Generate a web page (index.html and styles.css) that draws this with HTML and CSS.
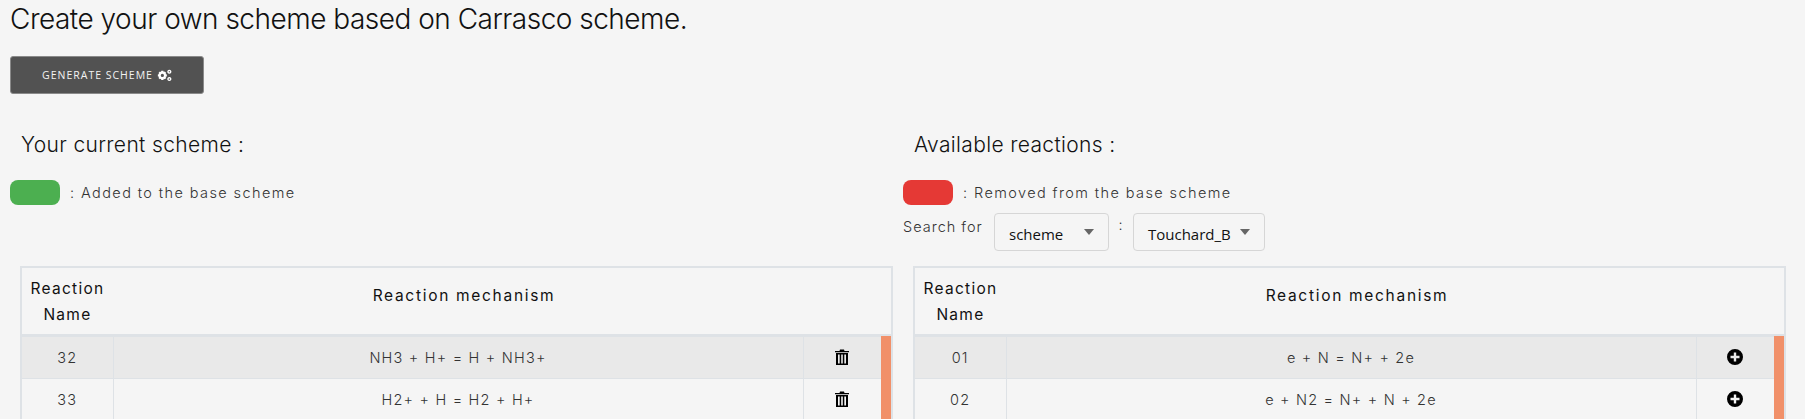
FILE: index.html
```html
<!DOCTYPE html>
<html lang="en">
<head>
<meta charset="utf-8">
<title>Create your own scheme</title>
<link rel="stylesheet" href="styles.css">
</head>
<body>
<h1 class="title">Create your own scheme based on Carrasco scheme.</h1>
<button class="generate" type="button">GENERATE SCHEME
  <svg class="gears" viewBox="0 0 14 12" width="15" height="13"><path fill="#fff" fill-rule="evenodd" d="M4 1.6h2l.3 1.2 1-.5 1.3 1.3-.6 1 1.2.4v1.9l-1.2.3.6 1.1L7.3 9.600l-1-.6-.3 1.200H4l-.3-1.200-1 .6L1.400 8.300l.6-1.100L.8 6.900V5l1.200-.4-.6-1 1.300-1.300 1 .5zM5 4.400a1.500 1.500 0 1 0 0 3 1.500 1.500 0 0 0 0-3z"/><path fill="none" stroke="#fff" stroke-width="1.300" d="M11.500 1.200a1.300 1.300 0 1 0 .01 0zM11.500 8a1.300 1.300 0 1 0 .01 0z"/></svg>
</button>
<div class="columns">
  <section class="col">
    <h2 class="sub">Your current scheme :</h2>
    <div class="legend"><span class="pill green"></span><span>: Added to the base scheme</span></div>
    <div class="search-spacer"></div>
    <div class="table-wrap">
      <table class="reactions">
        <thead><tr><th class="c-name">Reaction<br>Name</th><th class="c-mech">Reaction mechanism</th><th class="c-act"></th></tr></thead>
        <tbody>
          <tr class="alt"><td class="c-name">32</td><td>NH3 + H+ = H + NH3+</td><td class="c-act">
            <svg class="icon" viewBox="0 0 14 16"><path fill-rule="evenodd" d="M0 2h4.500l.5-1.500h4L9.500 2H14v1.300H0zM1 4h12v12H1zM3 5.500v9h1.700v-9zM6.200 5.500v9h1.600v-9zM9.300 5.500v9H11v-9z"/></svg></td></tr>
          <tr><td class="c-name">33</td><td>H2+ + H = H2 + H+</td><td class="c-act">
            <svg class="icon" viewBox="0 0 14 16"><path fill-rule="evenodd" d="M0 2h4.500l.5-1.500h4L9.500 2H14v1.300H0zM1 4h12v12H1zM3 5.500v9h1.700v-9zM6.200 5.500v9h1.600v-9zM9.300 5.500v9H11v-9z"/></svg></td></tr>
        </tbody>
      </table>
      <div class="bar"></div>
    </div>
  </section>
  <section class="col">
    <h2 class="sub">Available reactions :</h2>
    <div class="legend"><span class="pill red"></span><span>: Removed from the base scheme</span></div>
    <div class="search">
      <span>Search for</span>
      <div class="select s1">scheme<i class="caret"></i></div>
      <span class="colon">:</span>
      <div class="select s2">Touchard_B<i class="caret"></i></div>
    </div>
    <div class="table-wrap">
      <table class="reactions">
        <thead><tr><th class="c-name">Reaction<br>Name</th><th class="c-mech">Reaction mechanism</th><th class="c-act"></th></tr></thead>
        <tbody>
          <tr class="alt"><td class="c-name">01</td><td>e + N = N+ + 2e</td><td class="c-act">
            <svg class="icon plus" viewBox="0 0 16 16"><path fill-rule="evenodd" d="M8 0a8 8 0 1 1 0 16A8 8 0 0 1 8 0zM6.800 3.500v3.300H3.500v2.400h3.300v3.300h2.400V9.200h3.300V6.800H9.200V3.500z"/></svg></td></tr>
          <tr><td class="c-name">02</td><td>e + N2 = N+ + N + 2e</td><td class="c-act">
            <svg class="icon plus" viewBox="0 0 16 16"><path fill-rule="evenodd" d="M8 0a8 8 0 1 1 0 16A8 8 0 0 1 8 0zM6.800 3.500v3.300H3.500v2.400h3.300v3.300h2.400V9.200h3.300V6.800H9.200V3.500z"/></svg></td></tr>
        </tbody>
      </table>
      <div class="bar"></div>
    </div>
  </section>
</div>
</body>
</html>
```
FILE: styles.css
```css
html, body { margin: 0; padding: 0; height: 419px; overflow: hidden; }
body {
  background: #f5f5f5;
  color: #222;
  font-family: "Inter", "Open Sans", "Liberation Sans", sans-serif;
  font-weight: 300;
  font-size: 15px;
}
.title {
  margin: 0;
  padding: 1px 0 0 10px;
  height: 56px;
  box-sizing: border-box;
  font-size: 28px;
  line-height: 36px;
  letter-spacing: -.5px;
  font-weight: 300;
  color: #111;
}
.generate {
  display: flex;
  align-items: center;
  justify-content: center;
  gap: 4px;
  width: 194px;
  height: 38px;
  margin: 0 0 0 10px;
  padding: 0;
  background: #525252;
  border: 1px solid #8a8a8a;
  border-radius: 3px;
  color: #f2f2f2;
  font: 400 10.500px "Open Sans", "Liberation Sans", sans-serif;
  letter-spacing: 1px;
}
.columns { display: flex; margin-top: 36px; }
.col { width: 893px; flex: none; padding-left: 10px; box-sizing: border-box; }
.sub {
  margin: 0 0 0 11px;
  height: 50px;
  font-size: 21px;
  line-height: 29px;
  letter-spacing: .35px;
  font-weight: 300;
  color: #111;
}
.legend { display: flex; align-items: center; gap: 10px; height: 24px; font-size: 14.500px; letter-spacing: 1.400px; color: #333; }
.pill { width: 50px; height: 25px; border-radius: 8px; flex: none; }
.green { background: #4caf50; }
.red { background: #e53935; }
.search-spacer { height: 62px; }
.search { display: flex; align-items: flex-start; height: 62px; padding-top: 9px; box-sizing: border-box; font-size: 14.500px; letter-spacing: 1px; color: #333; }
.search > span:first-child { margin-top: 5px; width: 91px; flex: none; }
.colon { width: 24px; text-align: center; margin-top: 3px; }
.select {
  position: relative;
  box-sizing: border-box;
  height: 38px;
  padding: 10px 0 0 14px;
  border: 1px solid #d6d6d6;
  border-radius: 4px;
  background: #f5f5f5;
  font: 500 15px "Open Sans", "Liberation Sans", sans-serif;
  letter-spacing: 0;
  color: #111;
}
.s1 { width: 115px; }
.s2 { width: 132px; }
.caret {
  position: absolute;
  right: 14px;
  top: 15px;
  border-left: 5px solid transparent;
  border-right: 5px solid transparent;
  border-top: 6px solid #666;
}
.table-wrap { position: relative; margin-left: 10px; width: 873px; }
.reactions {
  width: 100%;
  border-collapse: collapse;
  table-layout: fixed;
  border: 2px solid #dee2e6;
}
.reactions th {
  height: 68px;
  box-sizing: border-box;
  padding: 2px 0 0;
  font-size: 15.500px;
  line-height: 26px;
  font-weight: 400;
  letter-spacing: 1.300px;
  color: #111;
  border-bottom: 3px solid #dee2e6;
  text-align: center;
}
.reactions th.c-mech { padding: 0 0 10px 12px; letter-spacing: 1.700px; }
.reactions td {
  height: 41px;
  padding: 0;
  text-align: center;
  font-size: 14.500px;
  letter-spacing: 1.200px;
  color: #333;
  border: 1px solid #dee2e6;
}
.alt td { background: #e9e9e9; }
.c-name { width: 92px; }
.c-act { width: 89px; }
.icon { width: 14px; height: 16px; display: block; margin: 0 auto 0 31px; fill: #000; }
.plus { width: 16px; margin-left: 30px; }
.bar { position: absolute; right: 2px; top: 70px; bottom: 0; width: 10px; background: #f19069; }
```
